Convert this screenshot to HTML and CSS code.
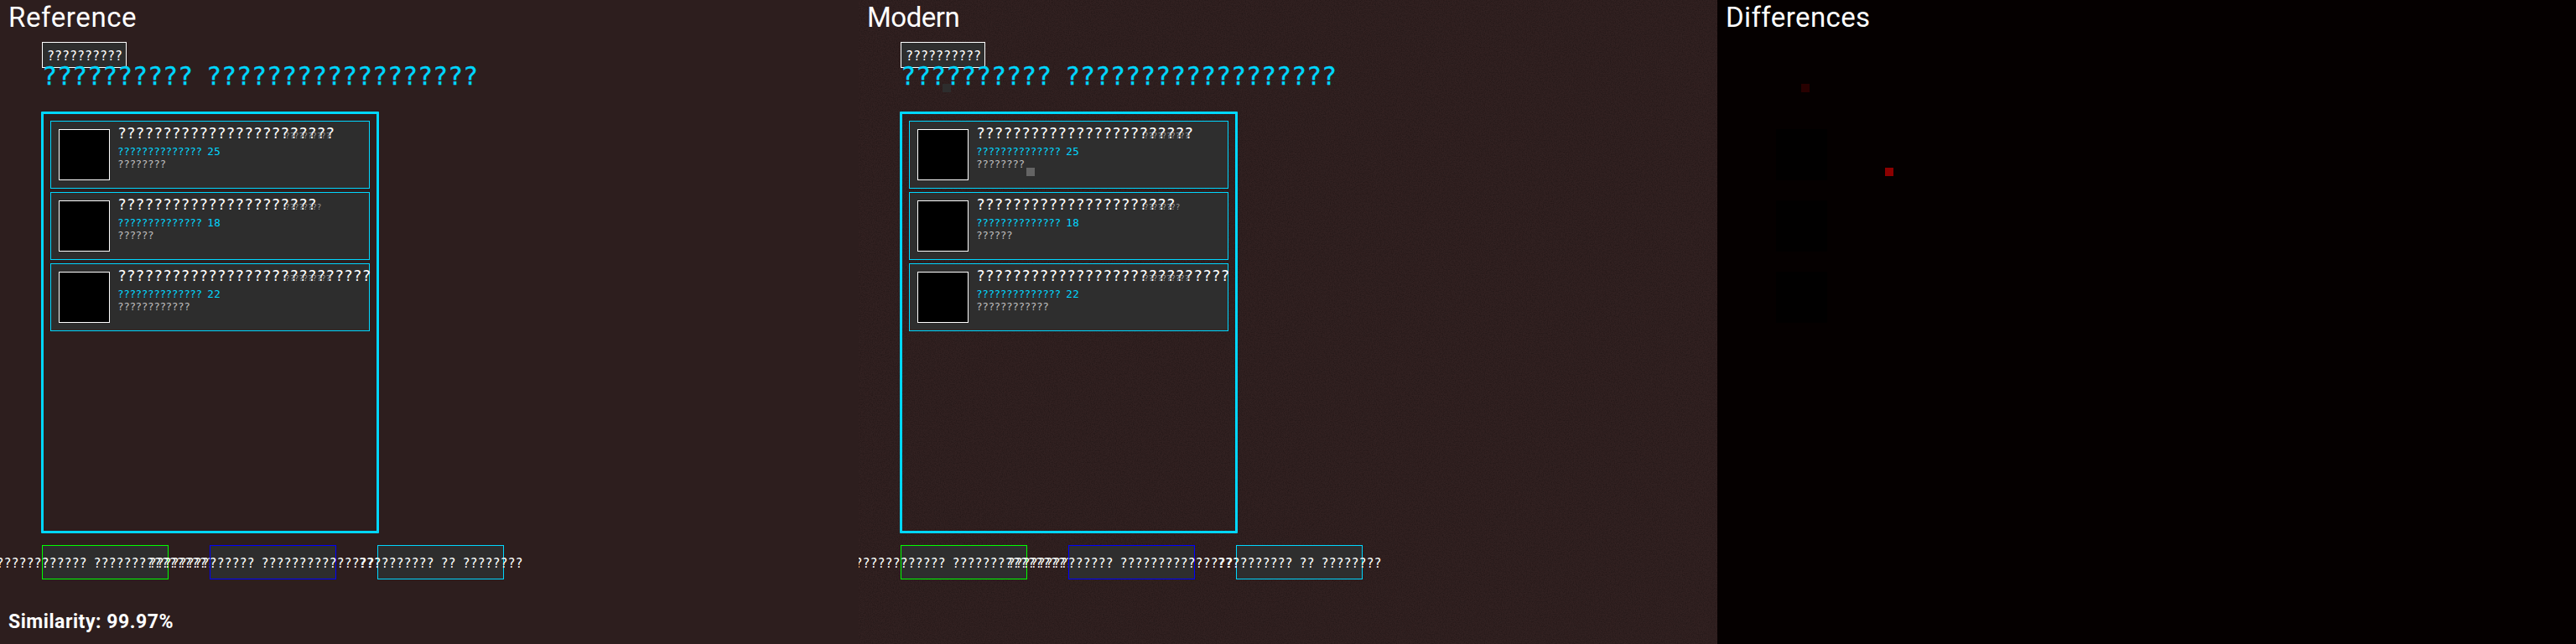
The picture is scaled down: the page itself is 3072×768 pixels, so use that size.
FILE: index.html
```
<!DOCTYPE html>
<html lang="en">
<head>
<meta charset="utf-8">
<title>Comparison</title>
<link rel="stylesheet" href="styles.css">
</head>
<body>
<main class="board">
  <section class="pane">
    <h2 class="caption reference">Reference</h2>
    <div class="back">??????????</div>
    <h1 class="title">?????????? ??????????????????</h1>
    <div class="list">
      <article class="item"><div class="thumb"></div><div class="info">
        <div class="name">????????????????????????</div><div class="price">?????????????? <b>25</b></div><div class="kind">????????</div></div><div class="tag">??????????</div></article>
      <article class="item"><div class="thumb"></div><div class="info">
        <div class="name">??????????????????????</div><div class="price">?????????????? <b>18</b></div><div class="kind">??????</div></div><div class="tag">????????</div></article>
      <article class="item"><div class="thumb"></div><div class="info">
        <div class="name">????????????????????????????</div><div class="price">?????????????? <b>22</b></div><div class="kind">????????????</div></div><div class="tag">??????????</div></article>
    </div>
    <div class="actions">
      <div class="action green"><span>???????????? ????????????????</span></div>
      <div class="action blue"><span>?????????????? ??????????????????</span></div>
      <div class="action cyan"><span>?????????? ?? ????????</span></div>
    </div>
    <p class="score">Similarity: 99.97%</p>
  </section>
  <section class="pane grain">
    <svg class="noise" width="1024" height="768" aria-hidden="true">
      <filter id="grain" x="0" y="0" width="100%" height="100%">
        <feTurbulence type="fractalNoise" baseFrequency="0.8" numOctaves="2" seed="4"/>
        <feColorMatrix values="0 0 0 0 0  0 0 0 0 0  0 0 0 0 0  0.5 0 0 0 -0.17"/>
      </filter>
      <rect width="1024" height="768" filter="url(#grain)"/>
    </svg>
    <h2 class="caption modern">Modern</h2>
    <div class="back">??????????</div>
    <h1 class="title">?????????? ??????????????????</h1>
    <div class="list">
      <article class="item"><div class="thumb"></div><div class="info">
        <div class="name">????????????????????????</div><div class="price">?????????????? <b>25</b></div><div class="kind">????????</div></div><div class="tag">??????????</div></article>
      <article class="item"><div class="thumb"></div><div class="info">
        <div class="name">??????????????????????</div><div class="price">?????????????? <b>18</b></div><div class="kind">??????</div></div><div class="tag">????????</div></article>
      <article class="item"><div class="thumb"></div><div class="info">
        <div class="name">????????????????????????????</div><div class="price">?????????????? <b>22</b></div><div class="kind">????????????</div></div><div class="tag">??????????</div></article>
    </div>
    <div class="actions">
      <div class="action green"><span>???????????? ????????????????</span></div>
      <div class="action blue"><span>?????????????? ??????????????????</span></div>
      <div class="action cyan"><span>?????????? ?? ????????</span></div>
    </div>
    <i class="mark mark-a"></i><i class="mark mark-b"></i>
  </section>
  <section class="pane diff">
    <h2 class="caption differences">Differences</h2>
    <i class="mark mark-a"></i><i class="mark mark-b"></i>
    <i class="ghost g1"></i><i class="ghost g2"></i><i class="ghost g3"></i>
  </section>
</main>
</body>
</html>
```

FILE: styles.css
```
* { box-sizing: border-box; margin: 0; padding: 0; }
body { width: 3072px; height: 768px; overflow: hidden; background: #2d1e1e; font-family: "DejaVu Sans Mono", monospace; color: #fff; }
.board { display: grid; grid-template-columns: repeat(3, 1024px); height: 768px; }
.pane { position: relative; overflow: hidden; padding: 50px 0 0 50px; background: #2d1e1e; }
.pane.grain { background: #322121; }
.pane.diff { background: #050000; }
.noise { position: absolute; left: 0; top: 0; }
.caption { position: absolute; left: 10px; top: 1px; font: 400 33px/40px Roboto, sans-serif; letter-spacing: 0.6px; white-space: nowrap; }
.modern { letter-spacing: -0.5px; }
.differences { letter-spacing: 0.4px; }
.back { position: relative; width: 101px; height: 31px; padding: 6px 0 0 5px; border: 1px solid #fff; background: #2d2d2d; font-size: 15px; line-height: 20px; letter-spacing: -0.03px; white-space: nowrap; }
.title { position: relative; height: 52px; margin-top: -10px; padding-top: 2px; color: #00d7ff; font-size: 30px; font-weight: 400; line-height: 36px; letter-spacing: -0.06px; word-spacing: -2px; white-space: nowrap; -webkit-text-stroke: 0.4px #00d7ff; }
.list { position: relative; display: flex; flex-direction: column; gap: 4px; width: 403px; height: 503px; margin: 10px 0 0 -1px; padding: 8px; border: 3px solid #00d7ff; border-radius: 1px; }
.item { position: relative; display: flex; flex: none; gap: 9px; width: 381px; height: 81px; padding: 9px; border: 1px solid #00d7ff; background: #2d2d2d; white-space: nowrap; }
.thumb { flex: none; width: 61px; height: 61px; border: 1px solid #fff; background: #000; }
.info { margin-top: -5px; }
.name { height: 24px; font-size: 18px; line-height: 20px; letter-spacing: -0.04px; }
.price, .kind { height: 15px; font-size: 12.6px; line-height: 16px; letter-spacing: -0.385px; word-spacing: -0.8px; }
.price { color: #00d7ff; }
.price b { font-weight: 400; letter-spacing: 0.4px; }
.kind { color: #bebebe; }
.tag { position: absolute; left: 279px; top: 12px; color: #969696; font-size: 9.4px; line-height: 10px; letter-spacing: -0.26px; }
.actions { display: flex; gap: 49px; margin-top: 14px; }
.action { position: relative; display: flex; justify-content: center; flex: none; width: 151px; height: 41px; padding-top: 11px; border: 1px solid; background: #2d2d2d; white-space: nowrap; }
.action span { flex: none; color: #fff; font-size: 15px; line-height: 20px; letter-spacing: -0.03px; word-spacing: -1px; }
.green { border-color: #0f0; }
.blue { border-color: #00f; }
.cyan { border-color: #00d7ff; }
.score { position: absolute; left: 10px; top: 726px; font: 700 23px/32px Roboto, sans-serif; letter-spacing: 0.55px; white-space: nowrap; }
.grain .back, .grain .item, .grain .action { background: #2e2e2e; }
.mark { position: absolute; width: 10px; height: 10px; }
.mark-a { left: 100px; top: 100px; background: #2d2d2d; }
.mark-b { left: 200px; top: 200px; background: #646464; }
.diff .mark-a { background: #280000; }
.diff .mark-b { background: #8c0000; }
.ghost { position: absolute; left: 70px; width: 61px; height: 61px; background: #010000; }
.g1 { top: 154px; }
.g2 { top: 239px; }
.g3 { top: 324px; }
```
